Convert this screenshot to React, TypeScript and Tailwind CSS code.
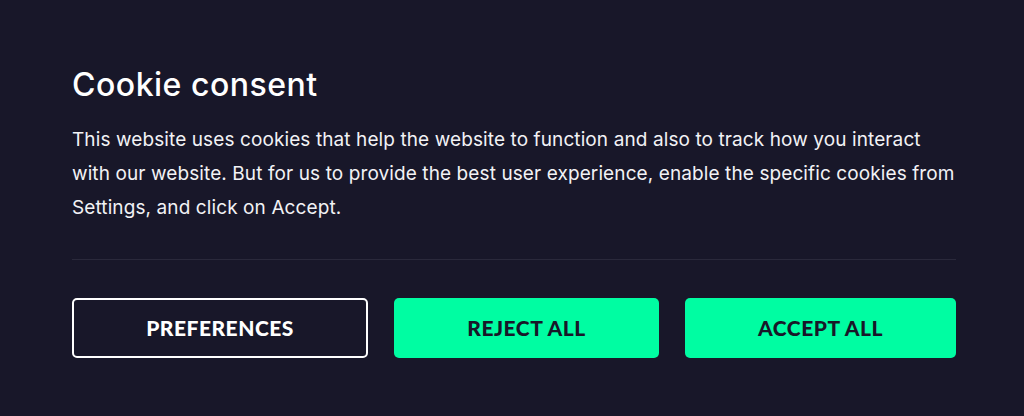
export default function App() {
  return (
    <div className="min-h-screen bg-[#181729] font-['Inter',sans-serif]">
      <div className="px-[72px] pt-[66px] w-[1028px]">
        <h1 className="text-[32px] leading-[38px] font-medium text-white tracking-[0.5px]">Cookie consent</h1>
        <p className="mt-[19px] w-[888px] text-[19px] leading-[34px] text-[#f2f2f5] tracking-[0.1px]">
          This website uses cookies that help the website to function and also to track how you interact with our
          website. But for us to provide the best user experience, enable the specific cookies from Settings, and click
          on Accept.
        </p>
        <div className="mt-[34px] h-px w-[884px] bg-[#2a293b]" />
        <div className="mt-[38px] grid w-[884px] grid-cols-[296px_265px_1fr] gap-[26px] font-['Lato',sans-serif] text-[21px] font-black tracking-[0.5px]">
          <button className="h-[60px] rounded-[5px] border-2 border-white text-white">PREFERENCES</button>
          <button className="h-[60px] rounded-[5px] bg-[#00fda2] text-[#181729]">REJECT ALL</button>
          <button className="h-[60px] rounded-[5px] bg-[#00fda2] text-[#181729]">ACCEPT ALL</button>
        </div>
      </div>
    </div>
  );
}
